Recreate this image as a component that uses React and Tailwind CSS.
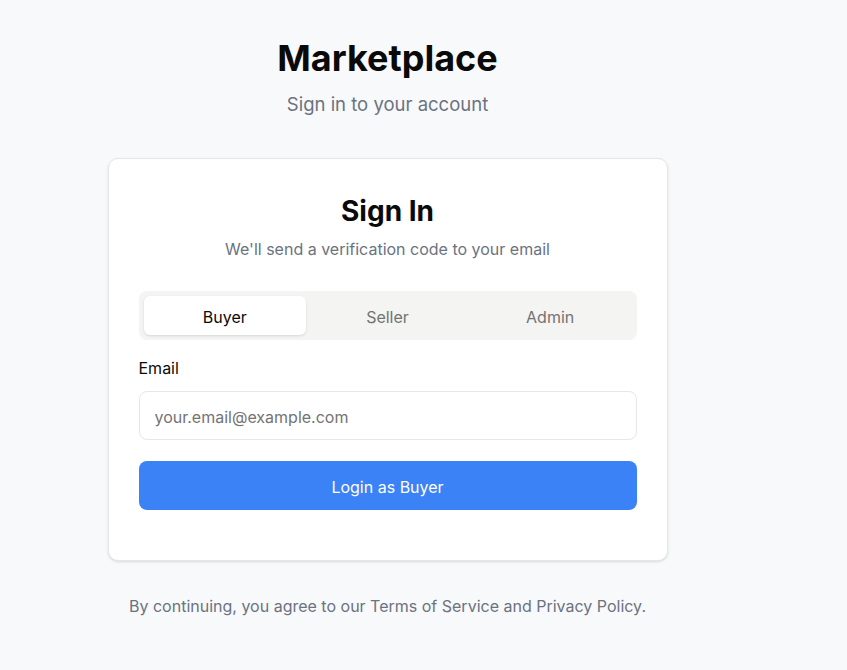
import React, { useState } from 'react';

const tabs = ['Buyer', 'Seller', 'Admin'];

export default function App() {
  const [role, setRole] = useState('Buyer');

  return (
    <div className="min-h-screen bg-[#f8f9fb] font-['Inter',sans-serif] text-[#0a0a0a]">
      <div className="w-[775px] pt-[38px] flex flex-col items-center">
        {/* Header */}
        <h1 className="text-[36px] leading-[40px] font-bold">Marketplace</h1>
        <p className="mt-[12px] text-[18.5px] leading-[28px] text-[#6b7280]">Sign in to your account</p>

        {/* Card */}
        <div className="mt-[40px] w-[560px] bg-white border border-[#e5e7eb] rounded-[10px] shadow-sm px-[30px] pt-[34px] pb-[50px]">
          <div className="text-center">
            <h2 className="text-[28px] leading-[36px] font-bold">Sign In</h2>
            <p className="mt-[8px] text-[16px] leading-[24px] text-[#6b7280]">We'll send a verification code to your email</p>
          </div>

          <div className="mt-[30px] grid grid-cols-3 p-[5px] bg-[#f4f4f2] rounded-lg">
            {tabs.map((t) => (
              <button
                key={t}
                onClick={() => setRole(t)}
                className={`h-[39px] pt-[2px] rounded-md text-[16px] ${
                  role === t ? 'bg-white text-[#0a0a0a] shadow-sm' : 'text-[#737373]'
                }`}
              >
                {t}
              </button>
            ))}
          </div>

          <label className="block mt-[16px] text-[16px] leading-[24px]">Email</label>
          <input
            type="email"
            placeholder="your.email@example.com"
            className="mt-[11px] w-full h-[49px] px-[15px] pt-[2px] text-[16px] border border-[#e5e7eb] rounded-lg outline-none placeholder:text-[#737373]"
          />

          <button className="mt-[21px] w-full h-[49px] pt-[2px] rounded-lg bg-[#3b82f6] text-white text-[16px]">
            Login as {role}
          </button>
        </div>

        <p className="mt-[33px] text-[16px] leading-[24px] text-[#6b7280]">
          By continuing, you agree to our Terms of Service and Privacy Policy.
        </p>
      </div>
    </div>
  );
}
